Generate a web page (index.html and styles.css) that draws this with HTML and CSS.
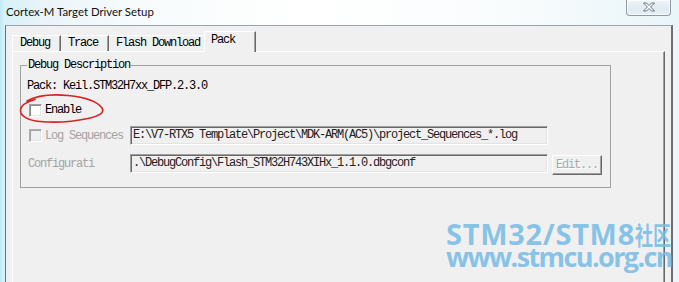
FILE: index.html
```html
<!DOCTYPE html>
<html>
<head>
<meta charset="utf-8">
<link rel="stylesheet" href="styles.css">
</head>
<body>
<div class="screen">
  <div class="titlebar">
    <span class="title">Cortex-M Target Driver Setup</span>
    <div class="close">
      <svg width="14" height="10" viewBox="0 0 14 10">
        <path d="M1.5 1 H4.5 L7 3.5 L9.5 1 H12.5 L8.6 5 L12.5 9 H9.5 L7 6.5 L4.5 9 H1.5 L5.4 5 Z" fill="#fff" stroke="#6a7480" stroke-width="1" stroke-linejoin="round"/>
      </svg>
    </div>
  </div>
  <div class="frame">
    <div class="tabs">
      <div class="tab t-debug">Debug</div>
      <div class="tab t-trace">Trace</div>
      <div class="tab t-flash">Flash Download</div>
      <div class="tab t-pack active">Pack</div>
    </div>
    <div class="panel">
      <fieldset class="group">
        <legend>Debug Description</legend>
        <div class="rows">
          <div class="row pack">Pack: Keil.STM32H7xx_DFP.2.3.0</div>
          <div class="row check-row"><span class="cb"></span><span class="cb-text">Enable</span></div>
          <div class="row field-row">
            <div class="lbl"><span class="cb disabled"></span><span class="cb-text dis">Log Sequences</span></div>
            <div class="input">E:\V7-RTX5 Template\Project\MDK-ARM(AC5)\project_Sequences_*.log</div>
          </div>
          <div class="row field-row">
            <div class="lbl"><span class="dis plain">Configurati</span></div>
            <div class="input">.\DebugConfig\Flash_STM32H743XIHx_1.1.0.dbgconf</div>
            <div class="btn">Edit...</div>
          </div>
        </div>
      </fieldset>
    </div>
  </div>
  <svg class="annot" width="679" height="282" viewBox="0 0 679 282">
    <path d="M27 101 C36 96, 52 94, 68 95.5 C83 97, 97 101, 102 108 C105 113, 99 116, 88 118.5 C74 121.5, 56 123, 40 121.5 C28 120.5, 20 116, 20.5 110 C21 105, 26 102, 35 99.5" fill="none" stroke="#d42424" stroke-width="1.6" stroke-linecap="round"/>
  </svg>
  <div class="watermark">
    <div class="wm1"><span class="lat">STM32/STM8</span><span class="cjk">社区</span></div>
    <div class="wm2">www.stmcu.org.cn</div>
  </div>
</div>
</body>
</html>
```

FILE: styles.css
```css
html, body {
  margin: 0;
  padding: 0;
}
body {
  width: 679px;
  height: 282px;
  overflow: hidden;
}
.screen {
  position: relative;
  width: 679px;
  height: 282px;
  overflow: hidden;
  background:
    linear-gradient(to right, #bfe9f4 0px, #d7f2f8 4px, rgba(255,255,255,0) 40px),
    linear-gradient(to right, #e4f1f7 0%, #f7fbfc 20%, #ffffff 45%, #f9fcfd 75%, #e9f5f9 100%);
}
.titlebar {
  display: flex;
  align-items: flex-start;
  height: 25px;
  padding-left: 6px;
  box-sizing: border-box;
}
.title {
  font-family: Lato, "Noto Sans", sans-serif;
  font-size: 11.4px;
  line-height: 24px;
  color: #111;
}
.close {
  margin-left: auto;
  margin-right: 8px;
  width: 45px;
  height: 16px;
  box-sizing: border-box;
  border: 1px solid #8d9aa6;
  border-top: none;
  border-radius: 0 0 4px 4px;
  background: linear-gradient(#eef5f9, #dfeaf1 60%, #e9f1f5);
  display: flex;
  align-items: center;
  justify-content: center;
  box-shadow: inset 0 0 0 1px rgba(255,255,255,0.7);
}
.close svg {
  display: block;
  margin-top: -2px;
}
.frame {
  margin-left: 5px;
  width: 668px;
  height: 257px;
  box-sizing: border-box;
  border-left: 1px solid #6e6e6e;
  border-right: 2px solid #6e6e6e;
  border-top: 1px solid #9da3a8;
  background: #f0f0f0;
  padding: 5px 6px 0 6px;
  display: flex;
  flex-direction: column;
}
.tabs {
  display: flex;
  align-items: flex-end;
  height: 20px;
  font-family: "Liberation Mono", monospace;
  font-size: 12px;
  letter-spacing: -1.2px;
  color: #000;
}
.tab {
  box-sizing: border-box;
  height: 16px;
  line-height: 15px;
  padding-left: 7px;
  border-top: 1px solid #ffffff;
  border-left: 1px solid #ffffff;
  border-right: 1px solid #696969;
  box-shadow: inset -1px 0 #a0a0a0;
  background: #f0f0f0;
  white-space: nowrap;
}
.t-debug { width: 49px; }
.t-trace { width: 48px; padding-left: 6px; border-left-color: #f0f0f0; }
.t-flash { width: 97px; padding-left: 6px; border-left-color: #f0f0f0; }
.tab.active {
  position: relative;
  z-index: 1;
  width: 52px;
  height: 21px;
  line-height: 17px;
  margin-left: -2px;
  margin-bottom: -1px;
  padding-left: 6px;
  border-left-color: #ffffff;
}
.panel {
  flex: 1;
  box-sizing: border-box;
  width: 653px;
  border-top: 1px solid #ffffff;
  border-left: 1px solid #ffffff;
  border-right: 1px solid #696969;
  box-shadow: inset -1px 0 #a0a0a0;
  padding: 7px 0 0 7px;
}
.group {
  margin: 0;
  padding: 0 0 14px 0;
  width: 591px;
  box-sizing: border-box;
  border: 1px solid #a0a0a0;
  font-family: "Liberation Mono", monospace;
  font-size: 12px;
  letter-spacing: -1.2px;
  color: #000;
}
.group legend {
  margin-left: 6px;
  padding: 0 1px;
  line-height: 12px;
}
.rows {
  padding-left: 6px;
}
.row {
  display: flex;
  align-items: center;
  white-space: nowrap;
}
.pack {
  margin-top: 9px;
  line-height: 12px;
  height: 12px;
}
.check-row {
  margin-top: 12px;
  height: 13px;
  line-height: 13px;
}
.cb {
  display: inline-block;
  width: 13px;
  height: 13px;
  box-sizing: border-box;
  margin-left: 2px;
  border: 1px solid;
  border-color: #a0a0a0 #ffffff #ffffff #a0a0a0;
  box-shadow: inset 1px 1px #8a8a8a, inset -1px -1px #e3e3e3;
  background: #ffffff;
  flex: none;
}
.cb.disabled {
  background: #f0f0f0;
  border-color: #b0b0b0 #ffffff #ffffff #b0b0b0;
  box-shadow: inset 1px 1px #a0a0a0, inset -1px -1px #e3e3e3;
}
.cb-text {
  margin-left: 3px;
}
.dis {
  color: #a3a3a3;
}
.plain {
  margin-left: 1px;
}
.field-row {
  margin-top: 9px;
  height: 19px;
  align-items: flex-start;
}
.lbl {
  width: 103px;
  height: 19px;
  display: flex;
  align-items: center;
  flex: none;
}
.input {
  width: 418px;
  height: 19px;
  box-sizing: border-box;
  border: 1px solid;
  border-color: #a0a0a0 #ffffff #ffffff #a0a0a0;
  box-shadow: inset 1px 1px #696969, inset -1px -1px #e3e3e3;
  background: #f0f0f0;
  padding-left: 2px;
  line-height: 17px;
  color: #222;
  overflow: hidden;
  flex: none;
}
.btn {
  margin-left: 4px;
  margin-top: 1px;
  width: 50px;
  height: 20px;
  box-sizing: border-box;
  border: 1px solid;
  border-color: #ffffff #696969 #696969 #ffffff;
  box-shadow: inset -1px -1px #a0a0a0;
  text-align: center;
  line-height: 18px;
  color: #a8a8a8;
  text-shadow: 1px 1px #ffffff;
  flex: none;
}
.annot {
  position: absolute;
  left: 0;
  top: 0;
  pointer-events: none;
}
.watermark {
  position: absolute;
  left: 446px;
  top: 218px;
  font-family: "Open Sans", "Noto Sans CJK SC", sans-serif;
  font-weight: 700;
  color: rgba(120, 188, 230, 0.88);
  white-space: nowrap;
  pointer-events: none;
}
.wm1 {
  display: flex;
  align-items: baseline;
  font-size: 29px;
  line-height: 32px;
}
.lat {
  letter-spacing: 0.7px;
}
.cjk {
  display: inline-block;
  font-family: "Noto Sans CJK SC", sans-serif;
  font-size: 25px;
  transform: scaleX(0.72);
  transform-origin: left center;
}
.wm2 {
  font-size: 27px;
  line-height: 24px;
  letter-spacing: -1.6px;
  margin-top: -5px;
}
```
